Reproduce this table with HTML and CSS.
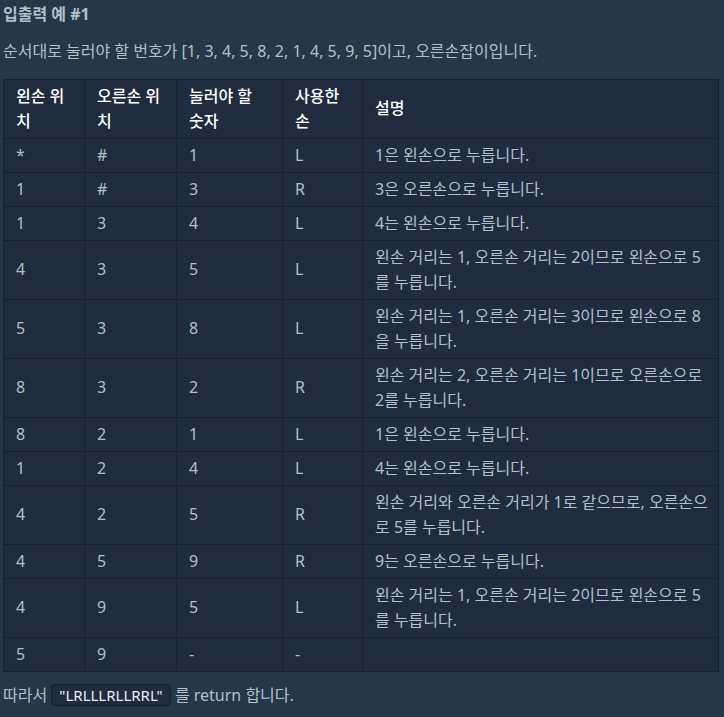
FILE: index.html
```html
<!DOCTYPE html>
<html lang="ko">
<head>
<meta charset="utf-8">
<link rel="stylesheet" href="styles.css">
</head>
<body>
<div class="doc">
  <h5 class="title">입출력 예 #1</h5>
  <p class="para">순서대로 눌러야 할 번호가 [1, 3, 4, 5, 8, 2, 1, 4, 5, 9, 5]이고, 오른손잡이입니다.</p>
  <table class="tbl">
    <colgroup>
      <col class="c1"><col class="c2"><col class="c3"><col class="c4"><col class="c5">
    </colgroup>
    <thead>
      <tr><th>왼손 위치</th><th>오른손 위치</th><th>눌러야 할 숫자</th><th>사용한 손</th><th>설명</th></tr>
    </thead>
    <tbody>
      <tr><td>*</td><td>#</td><td>1</td><td>L</td><td>1은 왼손으로 누릅니다.</td></tr>
      <tr><td>1</td><td>#</td><td>3</td><td>R</td><td>3은 오른손으로 누릅니다.</td></tr>
      <tr><td>1</td><td>3</td><td>4</td><td>L</td><td>4는 왼손으로 누릅니다.</td></tr>
      <tr><td>4</td><td>3</td><td>5</td><td>L</td><td>왼손 거리는 1, 오른손 거리는 2이므로 왼손으로 5를 누릅니다.</td></tr>
      <tr><td>5</td><td>3</td><td>8</td><td>L</td><td>왼손 거리는 1, 오른손 거리는 3이므로 왼손으로 8을 누릅니다.</td></tr>
      <tr><td>8</td><td>3</td><td>2</td><td>R</td><td>왼손 거리는 2, 오른손 거리는 1이므로 오른손으로 2를 누릅니다.</td></tr>
      <tr><td>8</td><td>2</td><td>1</td><td>L</td><td>1은 왼손으로 누릅니다.</td></tr>
      <tr><td>1</td><td>2</td><td>4</td><td>L</td><td>4는 왼손으로 누릅니다.</td></tr>
      <tr><td>4</td><td>2</td><td>5</td><td>R</td><td>왼손 거리와 오른손 거리가 1로 같으므로, 오른손으로 5를 누릅니다.</td></tr>
      <tr><td>4</td><td>5</td><td>9</td><td>R</td><td>9는 오른손으로 누릅니다.</td></tr>
      <tr><td>4</td><td>9</td><td>5</td><td>L</td><td>왼손 거리는 1, 오른손 거리는 2이므로 왼손으로 5를 누릅니다.</td></tr>
      <tr><td>5</td><td>9</td><td>-</td><td>-</td><td></td></tr>
    </tbody>
  </table>
  <p class="para last">따라서 <code class="code">"LRLLLRLLRRL"</code> 를 return 합니다.</p>
</div>
</body>
</html>
```
FILE: styles.css
```css
html, body {
  margin: 0;
  padding: 0;
  background: #263747;
}
body {
  font-family: "Noto Sans", "Noto Sans CJK KR", sans-serif;
  color: #b2c0cc;
  font-size: 16px;
}
.doc {
  padding: 2px 5px 0 3px;
}
.title {
  margin: 0;
  font-size: 16px;
  line-height: 24px;
  font-weight: 700;
  color: #b2c0cc;
}
.para {
  margin: 13px 0 0;
  line-height: 25.5px;
}
.para.last {
  margin-top: 11px;
}
.tbl {
  margin-top: 14px;
  width: 716px;
  table-layout: fixed;
  border-collapse: collapse;
  background: #202b3d;
  border: 1px solid #172030;
}
.c1 { width: 81px; }
.c2 { width: 92px; }
.c3 { width: 106px; }
.c4 { width: 80px; }
.tbl th, .tbl td {
  border: 1px solid #172030;
  padding: 4px 12px;
  line-height: 25px;
  text-align: left;
  vertical-align: middle;
}
.tbl th:last-child, .tbl td:last-child {
  padding-right: 6px;
}
.tbl th {
  color: #ffffff;
  font-weight: 500;
}
.code {
  font-family: "Noto Sans", "Noto Sans CJK KR", sans-serif;
  font-size: 15px;
  color: #e8eef3;
  background: #202b3d;
  border: 1px solid #172030;
  border-radius: 4px;
  padding: 0 7px;
}
```
